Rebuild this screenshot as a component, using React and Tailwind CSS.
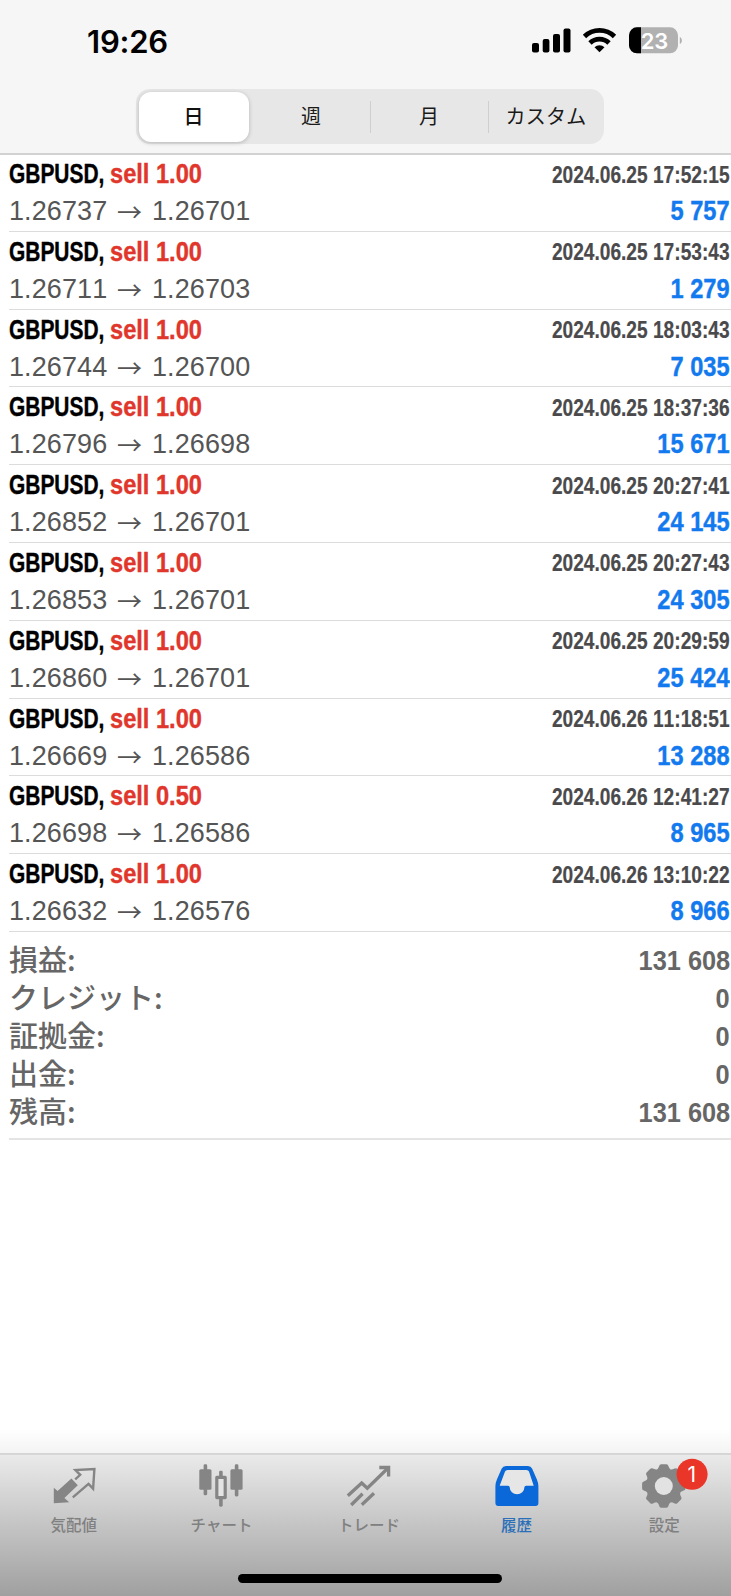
const trades = [
  ["1.00", "1.26737", "1.26701", "2024.06.25 17:52:15", "5 757"],
  ["1.00", "1.26711", "1.26703", "2024.06.25 17:53:43", "1 279"],
  ["1.00", "1.26744", "1.26700", "2024.06.25 18:03:43", "7 035"],
  ["1.00", "1.26796", "1.26698", "2024.06.25 18:37:36", "15 671"],
  ["1.00", "1.26852", "1.26701", "2024.06.25 20:27:41", "24 145"],
  ["1.00", "1.26853", "1.26701", "2024.06.25 20:27:43", "24 305"],
  ["1.00", "1.26860", "1.26701", "2024.06.25 20:29:59", "25 424"],
  ["1.00", "1.26669", "1.26586", "2024.06.26 11:18:51", "13 288"],
  ["0.50", "1.26698", "1.26586", "2024.06.26 12:41:27", "8 965"],
  ["1.00", "1.26632", "1.26576", "2024.06.26 13:10:22", "8 966"],
];

const totals = [
  ["損益:", "131 608"],
  ["クレジット:", "0"],
  ["証拠金:", "0"],
  ["出金:", "0"],
  ["残高:", "131 608"],
];

function StatusBar() {
  return (
    <div className="flex h-[89px] items-start justify-between pl-[87px] pr-[47px]">
      <span className="mt-[22px] font-['Inter',sans-serif] text-[31px] leading-[40px] font-semibold tracking-[-0.2px] text-black">
        19:26
      </span>
      <svg className="mt-[26px]" width="152" height="28" viewBox="0 0 152 28">
        <rect x="0" y="17" width="7" height="9.5" rx="2" />
        <rect x="10.7" y="13" width="6.7" height="13.5" rx="2" />
        <rect x="21" y="8" width="7" height="18.5" rx="2" />
        <rect x="31.5" y="2.5" width="7" height="24" rx="2" />
        <g fill="none" stroke="#000" strokeWidth="4.8">
          <path d="M52.5 10.5a21.5 21.5 0 0 1 30 0" />
          <path d="M58 17a13.6 13.6 0 0 1 19 0" />
        </g>
        <path d="M67.5 26.3l-5-5a7.3 7.3 0 0 1 10 0z" />
        <clipPath id="battery"><rect x="97" y="1.300" width="49" height="26" rx="8" /></clipPath>
        <g clipPath="url(#battery)">
          <rect x="97" y="1" width="50" height="27" fill="#b1b1b1" />
          <rect x="97" y="1" width="12" height="27" />
        </g>
        <path d="M147.8 11c2.8 1 2.8 6 0 7z" fill="#b1b1b1" />
        <text x="122.5" y="22.6" textAnchor="middle" fill="#fff" className="font-['Inter',sans-serif] text-[22px] font-semibold">23</text>
      </svg>
    </div>
  );
}

function Segments() {
  const text = "flex items-center justify-center pb-[1px] text-[20px] leading-none text-[#1a1a1a]";
  return (
    <div className="ml-[136px] flex h-[55px] w-[468px] rounded-[14px] bg-[#e7e7e7] p-[2.5px] font-['Noto_Sans_CJK_JP',sans-serif]">
      <div className="mr-[4px] flex w-[110px] items-center justify-center rounded-[12px] bg-white pb-[1px] text-[20px] leading-none font-medium text-[#111] shadow-[0_1px_4px_rgba(0,0,0,0.22)]">日</div>
      <div className={text + " w-[117px]"}>週</div>
      <div className="my-[9px] w-px bg-[#cfcfcf]" />
      <div className={text + " w-[117px]"}>月</div>
      <div className="my-[9px] w-px bg-[#cfcfcf]" />
      <div className={text + " flex-1 pl-[2px] tracking-[0.3px]"}>カスタム</div>
    </div>
  );
}

function Trade({ trade }) {
  const [volume, open, close, time, profit] = trade;
  return (
    <div className="ml-[9px] flex h-[77.8px] flex-col border-b border-[#dcdcdc] pt-[2px] pr-[1px] whitespace-nowrap">
      <div className="flex h-[37px] items-center justify-between font-bold">
        <div className="flex text-[27px] leading-[37px] [-webkit-text-stroke:0.4px]">
          <span className="w-[101px]"><span className="inline-block origin-left scale-x-[0.775] text-black">GBPUSD,</span></span>
          <span className="inline-block origin-left scale-x-[0.875] text-[#e0362c]">sell {volume}</span>
        </div>
        <span className="origin-right scale-x-[0.832] text-[23px] leading-[36px] text-[#4a4a4c] [-webkit-text-stroke:0.2px]">{time}</span>
      </div>
      <div className="flex h-[36px] items-center justify-between text-[27px] leading-[36px]">
        <div className="flex text-[#555]">
          <span className="w-[108px] tracking-[0.1px]">{open}</span>
          <span className="w-[35px] font-['Noto_Sans_CJK_JP',sans-serif] text-[25px]">→</span>
          <span className="tracking-[0.1px]">{close}</span>
        </div>
        <span className="origin-right scale-x-[0.875] font-bold text-[#127aee] [-webkit-text-stroke:0.4px]">{profit}</span>
      </div>
    </div>
  );
}

const gearTeeth = [0, 45, 90, 135, 180, 225, 270, 315];

const tabs = [
  {
    label: "気配値",
    icon: (
      <>
        <path d="M9.8 48.3V32.7l3.8 3.4 13.8-12.6 6.4 6.8-13.4 12.8 4.8 4.2z" fill="#858585" />
        <path d="M28.800 42.3l15.7-13.5 4.6 4.8 1.3-19.6-19 1.1 4.8 4.7-5 4.6" fill="none" stroke="#858585" strokeWidth="2.4" />
      </>
    ),
  },
  {
    label: "チャート",
    icon: (
      <g fill="#858585">
        <rect x="12.6" y="9.3" width="3.6" height="31" rx="1.4" />
        <rect x="8.3" y="14.3" width="12.2" height="20.4" rx="1.5" />
        <rect x="28.1" y="15.7" width="3.6" height="7" rx="1.4" />
        <rect x="28.1" y="42" width="3.6" height="9.7" rx="1.4" />
        <rect x="25.8" y="22.4" width="8.4" height="20.2" fill="#e4e4e4" stroke="#858585" strokeWidth="3.2" strokeLinejoin="round" />
        <rect x="43.8" y="9.3" width="3.6" height="32.2" rx="1.4" />
        <rect x="39.4" y="14.3" width="12.2" height="20.4" rx="1.5" />
      </g>
    ),
  },
  {
    label: "トレード",
    icon: (
      <g fill="none" stroke="#858585" strokeWidth="3.3">
        <path d="M8.8 40.8L22.7 28l5.6 5.2 20.5-20" />
        <path d="M40.3 12.5h9.3v9" />
        <path d="M12.2 50l11.4-11.2M22.8 49.8l12.2-11.6" />
      </g>
    ),
  },
  {
    label: "履歴",
    active: true,
    icon: (
      <>
        <path d="M19 14h22l7 18-10 10H22L11 32z" fill="#e6e6e6" />
        <path
          fillRule="evenodd"
          fill="#0a68d8"
          d="M19 11h22q3 0 4.2 2.8l4.6 10.4q1.6 3.6 1.6 7V48q0 3-3 3H11.4q-3 0-3-3V31.2q0-3.4 1.6-7l4.6-10.4Q15.9 11 19 11zM20.5 15q-1.8 0-2.5 1.6L12.7 30.7H21q1.7 0 1.7 1.6a7.35 7 0 0 0 14.7 0q0-1.6 1.7-1.6h7.6L42 16.6Q41.3 15 39.5 15z"
        />
      </>
    ),
  },
  {
    label: "設定",
    badge: "1",
    icon: (
      <>
        <g fill="#858585" transform="translate(29.8 31)">
          {gearTeeth.map((a) => (
            <path key={a} transform={`rotate(${a})`} d="M-7.5-15.5Q-5.2-17.5-4.6-20Q-4.2-21.7-2.6-21.7H2.6Q4.2-21.7 4.6-20Q5.2-17.5 7.5-15.5z" />
          ))}
          <circle r="17.3" />
          <circle r="9" fill="#e2e2e2" />
        </g>
        <circle cx="58.1" cy="19.2" r="15.5" fill="#ea3529" />
        <text x="57.8" y="26.6" textAnchor="middle" fill="#fff" className="font-['Inter',sans-serif] text-[21px]">1</text>
      </>
    ),
  },
];

export default function App() {
  return (
    <div className="flex h-[1596px] w-[731px] flex-col overflow-hidden bg-white font-['Liberation_Sans','Noto_Sans_CJK_JP',sans-serif] [font-kerning:none]">
      <header className="h-[155px] shrink-0 border-b-2 border-[#d2d2d2] bg-[#f6f6f6]">
        <StatusBar />
        <Segments />
      </header>
      <main className="-mt-px flex-1">
        <div>{trades.map((t) => <Trade key={t[3]} trade={t} />)}</div>
        <div className="ml-[9px] border-b-2 border-[#e4e4e4] pt-[9px] pr-[1px] pb-[7px] text-[#666]">
          {totals.map(([label, value]) => (
            <div key={label} className="flex h-[38px] items-center justify-between whitespace-nowrap">
              <span className="pb-[4px] font-['Noto_Sans_CJK_JP',sans-serif] text-[29px] leading-[34px] font-medium">{label}</span>
              <span className="origin-right scale-x-[0.905] pt-[2px] text-[28px] leading-[36px] font-bold">{value}</span>
            </div>
          ))}
        </div>
      </main>
      <div className="h-[23px] shrink-0 bg-linear-to-b from-white to-[#f3f3f3]" />
      <div className="flex h-[143px] shrink-0 flex-col bg-linear-to-b from-[#ebebeb] to-[#a0a0a0]">
        <nav className="flex h-[121px] w-[738px] border-t-2 border-[#d6d6d6]">
          {tabs.map((t) => (
            <div key={t.label} className="flex flex-1 flex-col items-center">
              <svg className="overflow-visible" width="60" height="58" viewBox="0 0 60 58">{t.icon}</svg>
              <span className={"font-['Noto_Sans_CJK_JP',sans-serif] text-[15.5px] leading-[22px] font-medium " + (t.active ? "text-[#2a6fb8]" : "text-[#808080]")}>{t.label}</span>
            </div>
          ))}
        </nav>
        <div className="ml-[238px] h-[9px] w-[264px] rounded-full bg-black" />
      </div>
    </div>
  );
}
